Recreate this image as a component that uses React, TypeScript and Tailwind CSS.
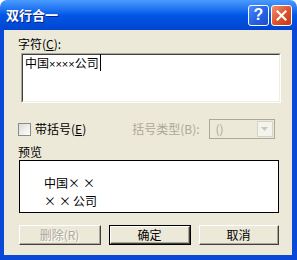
import React from "react";

const cjk = { fontFamily: '"Noto Sans CJK SC", "Liberation Sans", sans-serif' };

function Raised({ children, width, def = false, disabled = false }: { children: React.ReactNode; width: string; def?: boolean; disabled?: boolean }) {
  return (
    <div className={`${width} h-[20px] ${def ? "border border-black" : ""}`}>
      <div className="h-full w-full border-t border-l border-t-white border-l-white border-b border-r border-b-[#404040] border-r-[#404040]">
        <div className="h-full w-full border-b border-r border-b-[#ACA899] border-r-[#ACA899] bg-[#ECE9D8] flex items-center justify-center text-[12px] leading-none">
          <span className={disabled ? "text-[#ACA899] [text-shadow:1px_1px_0_#fff]" : "text-black"}>{children}</span>
        </div>
      </div>
    </div>
  );
}

export default function App() {
  return (
    <div className="w-[297px] h-[260px] flex flex-col select-none" style={cjk}>
      {/* title bar */}
      <div className="h-[30px] rounded-t-[7px] bg-gradient-to-b from-[#4A9BFF] via-[#0058E6] to-[#0044CF] flex items-center pl-[6px] pr-[5px]">
        <span className="text-white font-bold text-[13px] flex-1 [text-shadow:1px_1px_0_#0A1E8C]">双行合一</span>
        <div className="flex gap-[2px]">
          <div className="w-[21px] h-[21px] rounded-[3px] border border-white bg-gradient-to-br from-[#4F8CFF] via-[#2663E6] to-[#1C4FCB] flex items-center justify-center text-white font-bold text-[16px] leading-none" style={{ fontFamily: '"Liberation Sans", sans-serif' }}>?</div>
          <div className="w-[21px] h-[21px] rounded-[3px] border border-white bg-gradient-to-br from-[#F09070] via-[#E0522C] to-[#C23A14] flex items-center justify-center">
            <svg width="11" height="11" viewBox="0 0 11 11">
              <path d="M1.5 1.5 L9.5 9.5 M9.5 1.5 L1.5 9.5" stroke="#fff" strokeWidth="2.2" strokeLinecap="square" />
            </svg>
          </div>
        </div>
      </div>

      {/* body */}
      <div className="flex-1 bg-[#ECE9D8] border-l-[4px] border-r-[5px] border-b-[5px] border-[#0A48D8] flex flex-col text-[12px] text-black">
        <div className="pl-[14px] pt-[7px] h-[21px] leading-[14px]">
          字符(<span className="underline">C</span>):
        </div>
        <div className="ml-[17px] mt-[2px] w-[260px] h-[50px] border-t border-l border-t-[#ACA899] border-l-[#ACA899] border-b border-r border-b-white border-r-white">
          <div className="h-full w-full border-t border-l border-t-[#404040] border-l-[#404040] border-b border-r border-b-[#F1EFE2] border-r-[#F1EFE2] bg-white px-[2px] pt-[1px] leading-[14px]">
            <span>中国</span>
            <span style={{ fontFamily: '"Liberation Sans", sans-serif' }} className="text-[11px]">××××</span>
            <span className="border-r border-black pr-[1px]">公司</span>
          </div>
        </div>

        <div className="mt-[16px] h-[20px] flex items-center">
          <div className="ml-[14px] w-[13px] h-[13px] border border-[#8A8A8A] bg-gradient-to-br from-[#DCDCD4] to-white" />
          <span className="ml-[4px]">带括号(<span className="underline">E</span>)</span>
          <span className="ml-[46px] text-[#ACA899]">括号类型(B):</span>
          <div className="ml-[9px] w-[66px] h-[20px] border border-[#ACA899] bg-[#ECE9D8] flex items-center">
            <span className="flex-1 pl-[6px] text-[#ACA899]">()</span>
            <div className="w-[16px] h-[16px] mr-[1px] bg-[#F4F3EE] border border-[#D7D3C5] flex items-center justify-center">
              <svg width="7" height="4" viewBox="0 0 7 4"><path d="M0 0 H7 L3.5 4 Z" fill="#C9C7BA" /></svg>
            </div>
          </div>
        </div>

        <div className="pl-[14px] mt-[6px] h-[15px] leading-[14px]">预览</div>
        <div className="ml-[15px] w-[260px] h-[53px] border border-black bg-white pl-[24px] pt-[13px] leading-[18px]">
          <div>中国<span className="tracking-[3px]">×</span>×</div>
          <div><span className="tracking-[3px]">×</span><span className="mr-[2px]">×</span>公司</div>
        </div>

        <div className="mt-[12px] flex ml-[15px]">
          <Raised width="w-[82px]" disabled>删除(R)</Raised>
          <div className="ml-[8px]"><Raised width="w-[82px]" def>确定</Raised></div>
          <div className="ml-[8px]"><Raised width="w-[80px]">取消</Raised></div>
        </div>
      </div>
    </div>
  );
}
